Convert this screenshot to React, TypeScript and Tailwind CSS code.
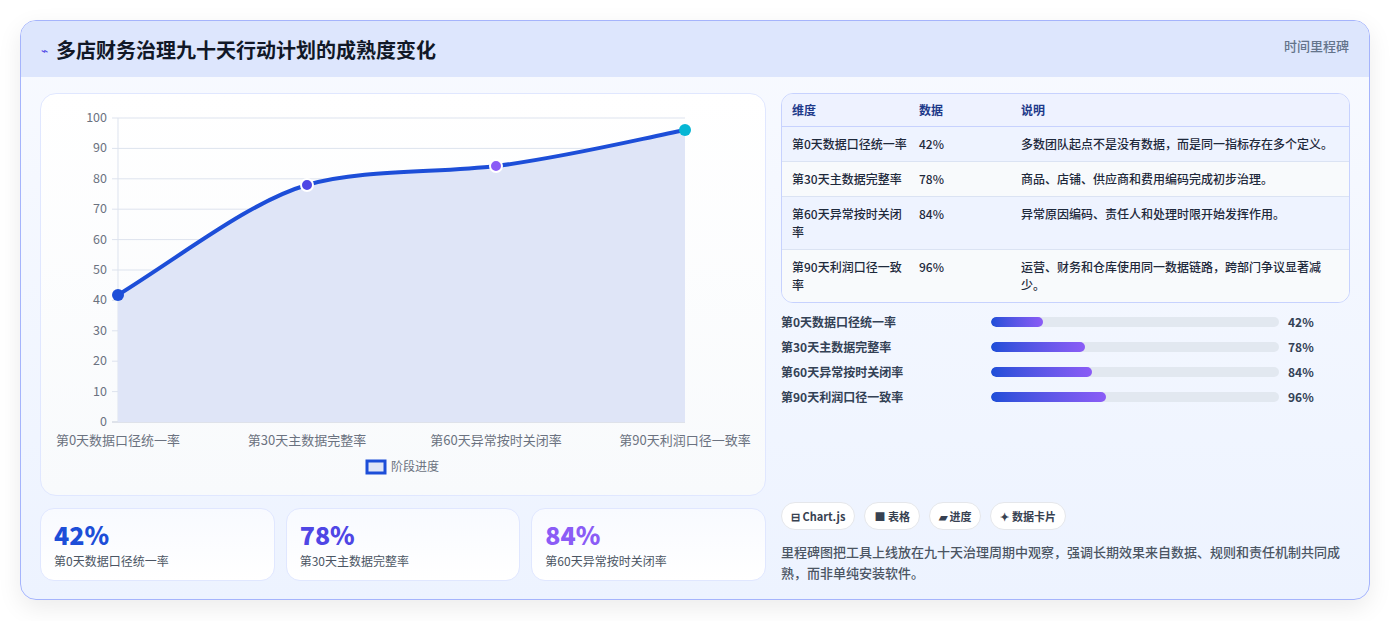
import React from "react";

const F = '"Noto Sans CJK SC", "Noto Sans", sans-serif';

const rows = [
  ["第0天数据口径统一率", "42%", "多数团队起点不是没有数据，而是同一指标存在多个定义。"],
  ["第30天主数据完整率", "78%", "商品、店铺、供应商和费用编码完成初步治理。"],
  ["第60天异常按时关闭率", "84%", "异常原因编码、责任人和处理时限开始发挥作用。"],
  ["第90天利润口径一致率", "96%", "运营、财务和仓库使用同一数据链路，跨部门争议显著减少。"],
];
const bars = [
  ["第0天数据口径统一率", 18, "42%"],
  ["第30天主数据完整率", 32.5, "78%"],
  ["第60天异常按时关闭率", 35, "84%"],
  ["第90天利润口径一致率", 40, "96%"],
];

function Chart() {
  const ox = 40, oy = 93;
  const X = (x: number) => x - ox;
  const Y = (y: number) => y - oy;
  const yv = (v: number) => 421 - v * 3.04;
  const grid = [0, 10, 20, 30, 40, 50, 60, 70, 80, 90, 100];
  const pts = [[117, 294], [306, 184], [495, 165], [684, 129]];
  const path = `M${X(117)},${Y(294)} C${X(180)},${Y(255)} ${X(250)},${Y(200)} ${X(306)},${Y(184)} C${X(360)},${Y(168)} ${X(440)},${Y(172)} ${X(495)},${Y(165)} C${X(560)},${Y(157)} ${X(630)},${Y(140)} ${X(684)},${Y(129)}`;
  const labels = [["第0天数据口径统一率", 117], ["第30天主数据完整率", 306], ["第60天异常按时关闭率", 495], ["第90天利润口径一致率", 684]];
  return (
    <svg width="725" height="401" style={{ fontFamily: F }}>
      {grid.map((g) => (
        <g key={g}>
          <line x1={X(111)} x2={X(684)} y1={Y(yv(g))} y2={Y(yv(g))} stroke={g === 0 ? "#c3cad8" : "#dde3ee"} />
          <text x={X(106)} y={Y(yv(g)) + 4} textAnchor="end" fontSize="12.5" fill="#6b7280">{g}</text>
        </g>
      ))}
      <line x1={X(117)} x2={X(117)} y1={Y(117)} y2={Y(421)} stroke="#dde3ee" />
      <path d={`${path} L${X(684)},${Y(421)} L${X(117)},${Y(421)} Z`} fill="#dfe5f7" />
      <path d={path} fill="none" stroke="#1d4ed8" strokeWidth="4" />
      {pts.map(([x, y], i) => (
        <circle key={i} cx={X(x)} cy={Y(y)} r={6} fill={["#1d4ed8", "#4f46e5", "#8b5cf6", "#06b6d4"][i]} stroke={i === 1 || i === 2 ? "#fff" : "none"} strokeWidth="2" />
      ))}
      {labels.map(([t, x], i) => (
        <text key={i} x={X(x as number)} y={Y(444)} textAnchor="middle" fontSize="13" fill="#6b7280">{t}</text>
      ))}
      <rect x={X(366)} y={Y(460)} width="18" height="12" fill="#dfe5f7" stroke="#1d4ed8" strokeWidth="3" />
      <text x={X(390)} y={Y(470)} fontSize="12" fill="#6b7280">阶段进度</text>
    </svg>
  );
}

export default function App() {
  return (
    <div className="w-[1390px] h-[621px] bg-white pt-[20px] pl-[20px]" style={{ fontFamily: F }}>
      <div className="w-[1350px] h-[580px] rounded-[16px] border border-[#a5b4fc] overflow-hidden bg-gradient-to-b from-[#f8faff] to-[#edf3ff] shadow-[0_8px_24px_rgba(0,0,0,0.08)]">
        <div className="h-[56px] bg-[#dde6fd] flex items-start justify-between px-[20px]">
          <div className="flex items-center gap-[8px] mt-[14px]">
            <span className="text-[#4f46e5] text-[12px]">⌁</span>
            <span className="text-[20px] font-bold text-[#111827]">多店财务治理九十天行动计划的成熟度变化</span>
          </div>
          <span className="mt-[15px] text-[13px] font-medium text-[#64748b]">时间里程碑</span>
        </div>
        <div className="flex gap-[15px] px-[19px] pt-[16px]">
          <div className="w-[726px] flex flex-col gap-[12px]">
            <div className="h-[403px] rounded-[16px] border border-[#e0e7ff] bg-gradient-to-b from-white to-[#f8fafc]">
              <Chart />
            </div>
            <div className="grid grid-cols-3 gap-[11px]">
              {[["42%", "第0天数据口径统一率", "text-[#1d4ed8]"], ["78%", "第30天主数据完整率", "text-[#4f46e5]"], ["84%", "第60天异常按时关闭率", "text-[#8b5cf6]"]].map(([v, l, c]) => (
                <div key={v} className="h-[73px] rounded-[14px] border border-[#e0e7ff] bg-gradient-to-b from-[#f8faff] to-white px-[13px] pt-[10px]">
                  <div className={`text-[25px] font-black leading-[30px] ${c}`}>{v}</div>
                  <div className="text-[12px] text-[#4b5563] mt-[3px]">{l}</div>
                </div>
              ))}
            </div>
          </div>
          <div className="w-[571px] h-[488px] flex flex-col">
            <div className="rounded-[12px] border border-[#c7d2fe] overflow-hidden text-[12px] text-[#1e293b] font-medium">
              <div className="flex h-[33px] items-center bg-[#eef2ff] border-b border-[#c7d2fe] text-[#1e3a8a] font-bold">
                <div className="w-[137px] pl-[10px]">维度</div>
                <div className="w-[102px]">数据</div>
                <div className="flex-1">说明</div>
              </div>
              {rows.map((r, i) => (
                <div key={i} className={`flex py-[8px] leading-[18px] ${i % 2 ? "bg-[#f8fafc]" : "bg-[#eef3ff]"} ${i < 3 ? "border-b border-[#dbe3f3]" : ""}`}>
                  <div className="w-[137px] pl-[10px] pr-[12px]">{r[0]}</div>
                  <div className="w-[102px]">{r[1]}</div>
                  <div className="flex-1 pr-[10px]">{r[2]}</div>
                </div>
              ))}
            </div>
            <div className="flex flex-col gap-[9px] mt-[11px]">
              {bars.map(([l, w, v]) => (
                <div key={l as string} className="flex items-center h-[16px] text-[12px] font-bold text-[#334155]">
                  <div className="w-[210px]">{l}</div>
                  <div className="w-[288px] h-[10px] rounded-full bg-[#e2e8f0] overflow-hidden">
                    <div className="h-full rounded-full bg-gradient-to-r from-[#1d4ed8] to-[#8b5cf6]" style={{ width: `${w}%` }} />
                  </div>
                  <div className="ml-[9px]">{v}</div>
                </div>
              ))}
            </div>
            <div className="mt-auto flex gap-[9px] text-[11px] font-bold text-[#374151]">
              {["⊟ Chart.js", "■ 表格", "▰ 进度", "✦ 数据卡片"].map((c) => (
                <span key={c} className="h-[28px] px-[9px] rounded-full bg-white border border-[#e5e7eb] flex items-center">{c}</span>
              ))}
            </div>
            <p className="mt-[11px] mb-[-2px] text-[13px] leading-[21px] font-medium text-[#4b5563]">里程碑图把工具上线放在九十天治理周期中观察，强调长期效果来自数据、规则和责任机制共同成熟，而非单纯安装软件。</p>
          </div>
        </div>
      </div>
    </div>
  );
}
